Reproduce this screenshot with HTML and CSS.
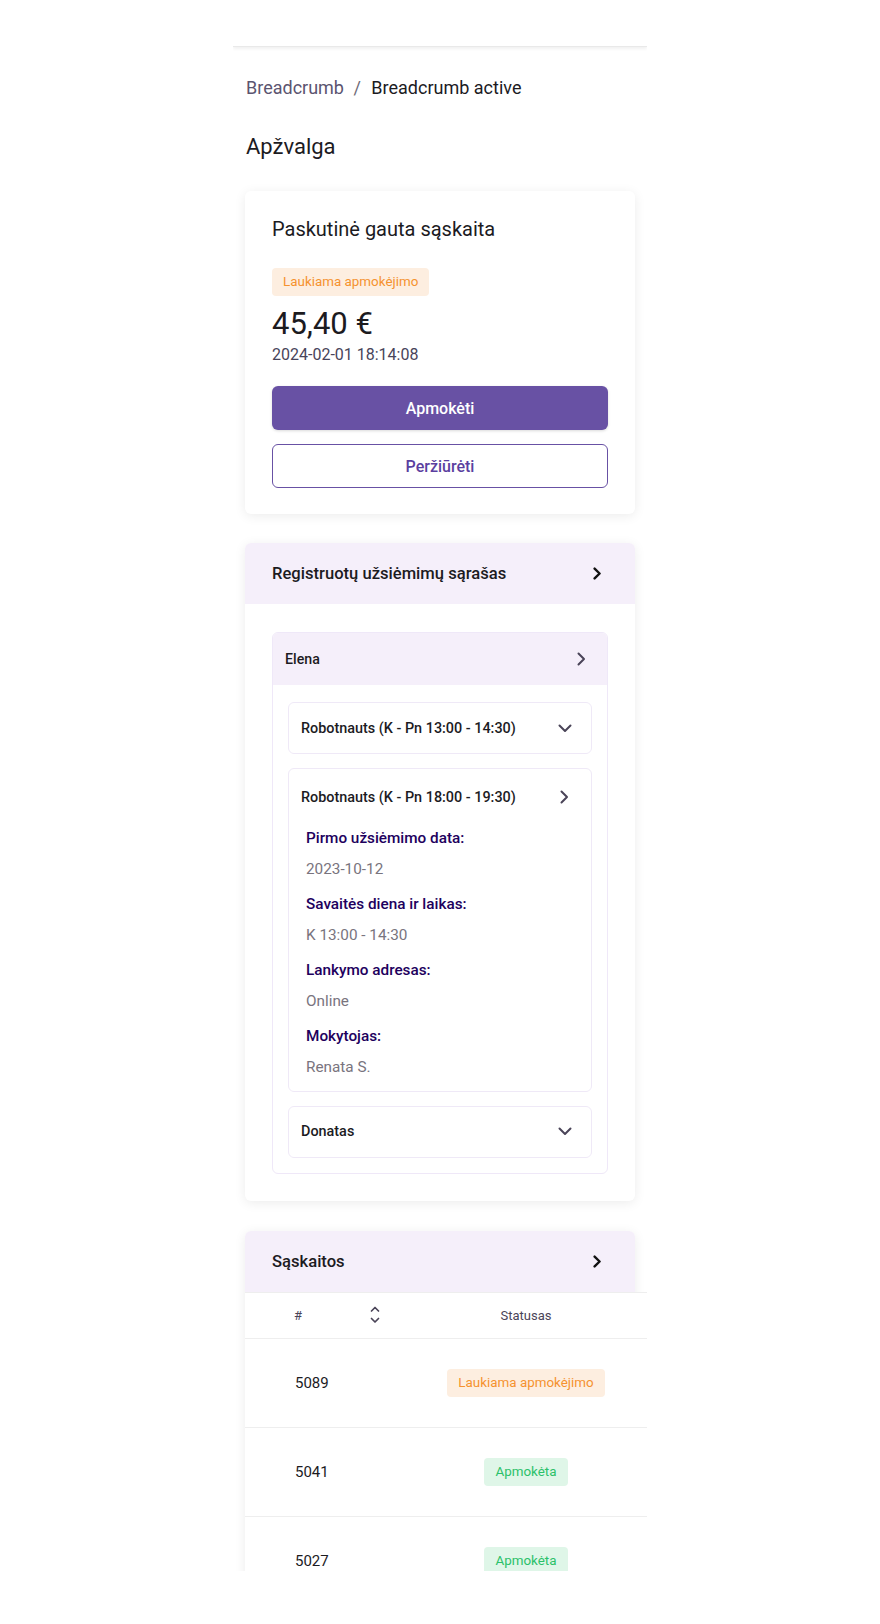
FILE: index.html
```html
<!DOCTYPE html>
<html lang="lt">
<head>
<meta charset="utf-8">
<title>Apžvalga</title>
<link rel="stylesheet" href="styles.css">
</head>
<body>
<div class="phone">
  <header class="topbar"></header>
  <main class="content">
    <nav class="breadcrumb">
      <span class="crumb">Breadcrumb</span>
      <span class="sep">/</span>
      <span class="crumb-active">Breadcrumb active</span>
    </nav>
    <h1 class="page-title">Apžvalga</h1>

    <section class="card card-invoice">
      <h2 class="card-title">Paskutinė gauta sąskaita</h2>
      <span class="badge badge-pending badge-lg">Laukiama apmokėjimo</span>
      <div class="amount">45,40 €</div>
      <div class="date">2024-02-01 18:14:08</div>
      <button class="btn btn-primary">Apmokėti</button>
      <button class="btn btn-outline">Peržiūrėti</button>
    </section>

    <section class="card">
      <div class="card-head">
        <span class="card-head-title">Registruotų užsiėmimų sąrašas</span>
        <svg class="chev-lg" width="9" height="13" viewBox="0 0 9 13"><path d="M1.6 1.6 L6.6 6.5 L1.6 11.4" fill="none" stroke="#111" stroke-width="2.4" stroke-linecap="round" stroke-linejoin="round"/></svg>
      </div>
      <div class="card-body">
        <div class="person">
          <div class="person-head">
            <span class="person-name">Elena</span>
            <svg width="9" height="14" viewBox="0 0 9 14"><path d="M1.5 1.5 L7 7 L1.5 12.5" fill="none" stroke="#4a4458" stroke-width="2" stroke-linecap="round" stroke-linejoin="round"/></svg>
          </div>
          <div class="person-list">
            <div class="item">
              <div class="item-head">
                <span class="item-title">Robotnauts (K - Pn 13:00 - 14:30)</span>
                <svg width="14" height="9" viewBox="0 0 14 9"><path d="M1.5 1.5 L7 7 L12.5 1.5" fill="none" stroke="#4a4458" stroke-width="2" stroke-linecap="round" stroke-linejoin="round"/></svg>
              </div>
            </div>
            <div class="item item-open">
              <div class="item-head">
                <span class="item-title">Robotnauts (K - Pn 18:00 - 19:30)</span>
                <svg width="9" height="14" viewBox="0 0 9 14"><path d="M1.5 1.5 L7 7 L1.5 12.5" fill="none" stroke="#4a4458" stroke-width="2" stroke-linecap="round" stroke-linejoin="round"/></svg>
              </div>
              <dl class="details">
                <dt>Pirmo užsiėmimo data:</dt>
                <dd>2023-10-12</dd>
                <dt>Savaitės diena ir laikas:</dt>
                <dd>K 13:00 - 14:30</dd>
                <dt>Lankymo adresas:</dt>
                <dd>Online</dd>
                <dt>Mokytojas:</dt>
                <dd>Renata S.</dd>
              </dl>
            </div>
            <div class="item">
              <div class="item-head">
                <span class="item-title">Donatas</span>
                <svg width="14" height="9" viewBox="0 0 14 9"><path d="M1.5 1.5 L7 7 L12.5 1.5" fill="none" stroke="#4a4458" stroke-width="2" stroke-linecap="round" stroke-linejoin="round"/></svg>
              </div>
            </div>
          </div>
        </div>
      </div>
    </section>

    <section class="card card-table">
      <div class="card-head">
        <span class="card-head-title">Sąskaitos</span>
        <svg class="chev-lg" width="9" height="13" viewBox="0 0 9 13"><path d="M1.6 1.6 L6.6 6.5 L1.6 11.4" fill="none" stroke="#111" stroke-width="2.4" stroke-linecap="round" stroke-linejoin="round"/></svg>
      </div>
      <div class="table">
        <div class="trow thead">
          <div class="col-num th-num">
            <span>#</span>
            <svg class="sort" width="10" height="20" viewBox="0 0 10 20"><path d="M1.5 6 L5 2.5 L8.5 6" fill="none" stroke="#4a4458" stroke-width="1.7" stroke-linecap="round" stroke-linejoin="round"/><path d="M1.5 13.5 L5 17 L8.5 13.5" fill="none" stroke="#4a4458" stroke-width="1.7" stroke-linecap="round" stroke-linejoin="round"/></svg>
          </div>
          <div class="col-status">Statusas</div>
        </div>
        <div class="trow">
          <div class="col-num">5089</div>
          <div class="col-status"><span class="badge badge-pending">Laukiama apmokėjimo</span></div>
        </div>
        <div class="trow">
          <div class="col-num">5041</div>
          <div class="col-status"><span class="badge badge-paid">Apmokėta</span></div>
        </div>
        <div class="trow">
          <div class="col-num">5027</div>
          <div class="col-status"><span class="badge badge-paid">Apmokėta</span></div>
        </div>
      </div>
    </section>
  </main>
</div>
</body>
</html>
```

FILE: styles.css
```css
* { box-sizing: border-box; }

body {
  margin: 0;
  background: #ffffff;
  font-family: Roboto, "Noto Sans", "Liberation Sans", sans-serif;
  color: #1c1b1f;
}

.phone {
  width: 414px;
  height: 1571px;
  margin: 0 auto;
  overflow: hidden;
  background: #ffffff;
}

.topbar {
  height: 47px;
  background: #ffffff;
  border-bottom: 1px solid #e9e9e9;
  box-shadow: 0 2px 3px rgba(0, 0, 0, 0.06);
}

.content {
  padding: 0 12px;
}

.breadcrumb {
  margin-top: 29px;
  font-size: 18px;
  line-height: 24px;
  padding-left: 1px;
}
.crumb { color: #5b5470; }
.sep { color: #6f6a78; margin: 0 6px 0 5px; }
.crumb-active { color: #1c1b1f; }

.page-title {
  margin: 33px 0 0 1px;
  font-size: 22px;
  line-height: 28px;
  font-weight: 400;
  color: #1c1b1f;
}

.card {
  background: #ffffff;
  border-radius: 6px;
  box-shadow: 0 2px 12px rgba(0, 0, 0, 0.08);
  margin-top: 29px;
}

.card-invoice {
  margin-top: 30px;
  padding: 26px 27px 26px 27px;
  display: flex;
  flex-direction: column;
  align-items: flex-start;
}

.card-title {
  margin: 0;
  font-size: 20px;
  line-height: 24px;
  font-weight: 400;
  color: #1c1b1f;
}

.badge {
  display: inline-block;
  height: 28px;
  line-height: 28px;
  padding: 0 11px;
  border-radius: 4px;
  font-size: 13.4px;
  white-space: nowrap;
}
.badge-pending { background: #fdeee0; color: #f5922f; }
.badge-paid { background: #dff6e8; color: #2bc16a; padding: 0 11px; }
.badge-lg { margin-top: 27px; }

.amount {
  margin-top: 10px;
  font-size: 31px;
  line-height: 36px;
  color: #1c1b1f;
}

.date {
  margin-top: 3px;
  font-size: 16px;
  line-height: 20px;
  color: #48445a;
}

.btn {
  width: 100%;
  height: 44px;
  border-radius: 6px;
  font-family: inherit;
  font-size: 16px;
  font-weight: 500;
  cursor: pointer;
}
.btn-primary {
  margin-top: 21px;
  background: #6851a4;
  color: #ffffff;
  border: none;
  box-shadow: 0 1px 3px rgba(0, 0, 0, 0.15);
}
.btn-outline {
  margin-top: 14px;
  background: #ffffff;
  color: #5b3fa0;
  border: 1px solid #6851a4;
}

.card-head {
  height: 61px;
  background: #f5effa;
  border-radius: 6px 6px 0 0;
  display: flex;
  align-items: center;
  justify-content: space-between;
  padding: 0 33px 0 27px;
}
.card-head-title {
  font-size: 16.6px;
  font-weight: 500;
  color: #1c1b1f;
}

.card-body {
  padding: 28px 27px 27px;
}

.person {
  border: 1px solid #efe8f8;
  border-radius: 6px;
  overflow: hidden;
}
.person-head {
  height: 52px;
  background: #f5effa;
  display: flex;
  align-items: center;
  justify-content: space-between;
  padding: 0 21px 0 12px;
}
.person-name {
  font-size: 14.2px;
  font-weight: 500;
  color: #1c1b1f;
}
.person-list {
  padding: 17px 15px 15px;
  display: flex;
  flex-direction: column;
  gap: 14px;
}

.item {
  border: 1px solid #efe9f7;
  border-radius: 6px;
}
.item-head {
  min-height: 50px;
  display: flex;
  align-items: center;
  justify-content: space-between;
  padding: 0 19px 0 12px;
}
.item-open .item-head {
  padding-top: 6px;
  padding-right: 22px;
}
.item-title {
  font-size: 14.4px;
  font-weight: 500;
  color: #1c1b1f;
}

.details {
  margin: 0;
  padding: 9px 16px 14px 17px;
}
.details dt {
  font-size: 15.3px;
  line-height: 20px;
  font-weight: 500;
  color: #21005d;
  margin-top: 15.5px;
}
.details dt:first-child { margin-top: 0; }
.details dd {
  margin: 10.5px 0 0;
  font-size: 15.3px;
  line-height: 20px;
  color: #79747e;
}

.card-table {
  margin-top: 30px;
  border-radius: 6px 6px 0 0;
}
.table {
  width: 420px;
  background: #ffffff;
  border-top: 1px solid #eeeeee;
}
.trow {
  display: flex;
  align-items: center;
  height: 89px;
  border-bottom: 1px solid #eeeeee;
}
.thead {
  height: 46px;
}
.col-num {
  width: 190px;
  padding-left: 50px;
  font-size: 15px;
  color: #1c1b1f;
}
.th-num {
  display: flex;
  align-items: center;
  padding-left: 49px;
  font-size: 13px;
  color: #4a4458;
}
.sort { margin-left: 68px; }
.col-status {
  width: 182px;
  text-align: center;
}
.thead .col-status {
  font-size: 13px;
  color: #4a4458;
}
```
